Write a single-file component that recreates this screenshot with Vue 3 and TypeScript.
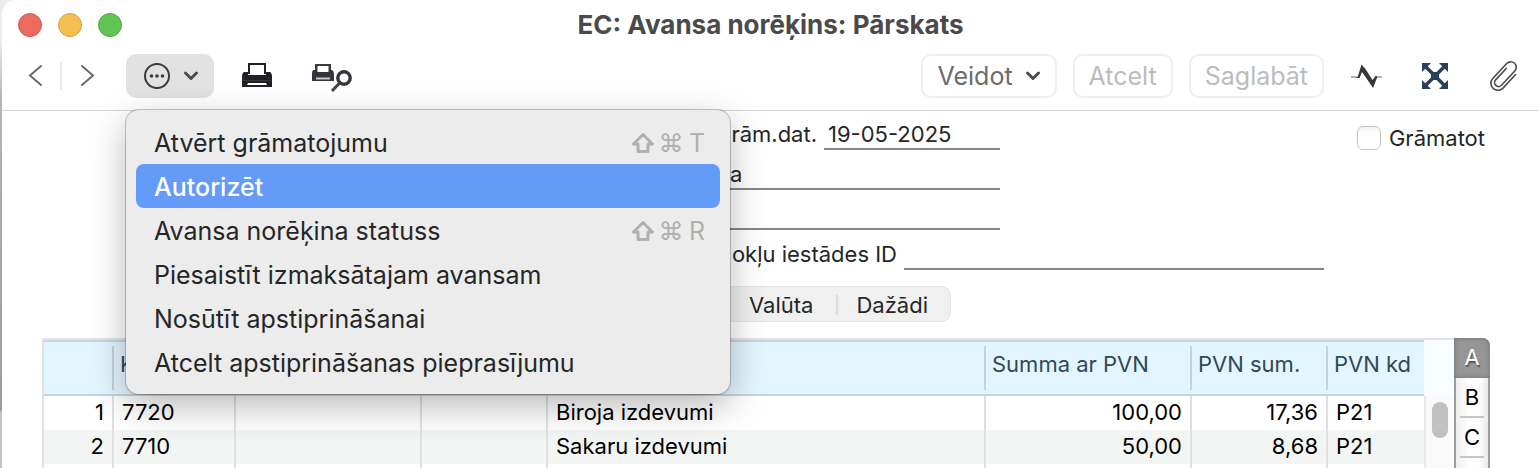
<script setup lang="ts">
import { ref } from 'vue'

interface MenuItem {
  label: string
  key?: string
}

interface Row {
  account: string
  text: string
  total: string
  vat: string
  code: string
}

const menu: MenuItem[] = [
  { label: 'Atvērt grāmatojumu', key: 'T' },
  { label: 'Autorizēt' },
  { label: 'Avansa norēķina statuss', key: 'R' },
  { label: 'Piesaistīt izmaksātajam avansam' },
  { label: 'Nosūtīt apstiprināšanai' },
  { label: 'Atcelt apstiprināšanas pieprasījumu' },
]
const activeItem = ref(1)

const rows: Row[] = [
  { account: '7720', text: 'Biroja izdevumi', total: '100,00', vat: '17,36', code: 'P21' },
  { account: '7710', text: 'Sakaru izdevumi', total: '50,00', vat: '8,68', code: 'P21' },
]

const date = ref('19-05-2025')
const person = ref('a')
const extra = ref('')
const taxId = ref('')
const posted = ref(false)
const sheets = ['A', 'B', 'C']
const sheet = ref('A')
</script>

<template>
  <div class="desk">
    <main class="window">
      <header class="head">
        <div class="titlebar">
          <div class="lights">
            <button class="light red" aria-label="Aizvērt"></button>
            <button class="light yellow" aria-label="Minimizēt"></button>
            <button class="light green" aria-label="Palielināt"></button>
          </div>
          <h1>EC: Avansa norēķins: Pārskats</h1>
        </div>
        <div class="toolbar">
          <div class="nav">
            <button class="plain" aria-label="Iepriekšējais">
              <svg width="16" height="24" viewBox="0 0 16 24"><path d="M14 2 3 11.500 14 21" /></svg>
            </button>
            <span class="divider"></span>
            <button class="plain" aria-label="Nākamais">
              <svg width="16" height="24" viewBox="0 0 16 24"><path d="m3 2 11 9.500L3 21" /></svg>
            </button>
          </div>
          <div class="ops">
            <button class="ops-button" aria-label="Darbības" aria-expanded="true">
              <svg width="28" height="28" viewBox="0 0 28 28">
                <circle cx="14" cy="14" r="12" fill="none" stroke="#3c3c3c" stroke-width="2" />
                <circle cx="8.5" cy="14" r="1.8" fill="#3c3c3c" />
                <circle cx="14" cy="14" r="1.8" fill="#3c3c3c" />
                <circle cx="19.5" cy="14" r="1.8" fill="#3c3c3c" />
              </svg>
              <svg width="16" height="12" viewBox="0 0 16 12"><path class="chev" d="m2.500 3 5.500 5.500L13.500 3" /></svg>
            </button>
            <ul class="menu" role="menu">
              <li v-for="(item, i) in menu" :key="item.label" role="none">
                <button role="menuitem" :class="{ active: i === activeItem }" @mouseenter="activeItem = i">
                  <span>{{ item.label }}</span>
                  <span v-if="item.key" class="keys">
                    <svg width="22" height="20" viewBox="0 0 22 20">
                      <path d="M11 1.500 20.500 11H16v7.500H6V11H1.500z" />
                    </svg>
                    <i>⌘</i><i>{{ item.key }}</i>
                  </span>
                </button>
              </li>
            </ul>
          </div>
          <button class="plain print" aria-label="Drukāt">
            <svg width="32" height="28" viewBox="0 0 32 28">
              <path d="M7 1h18v11H7z" fill="#202124" />
              <path d="M9 3h14v10H9z" fill="#fff" />
              <path d="M3 10h4v3h18v-3h4q2 1 2 5v10H1V15q0-4 2-5z" fill="#202124" />
              <path d="M2 18.500h28" stroke="#36373a" stroke-width="1" />
              <path d="M7 21h18l1 2H6z" fill="#fff" />
            </svg>
          </button>
          <button class="plain preview" aria-label="Priekšskatījums">
            <svg width="42" height="32" viewBox="0 0 42 32">
              <g transform="translate(0 2)">
                <path d="M4 2h16v9H4z" fill="#3a3b3e" />
                <path d="M6.500 4h11v6h-11z" fill="#fff" />
                <path d="M2 8h4v2h12V8h3q2 1 2 4v7H1v-7q0-3 1-4z" fill="#34353a" />
                <path d="M5 15.500h14v2H5z" fill="#c8c8c8" />
              </g>
              <circle cx="33" cy="18" r="6.200" fill="#fff" stroke="#34353a" stroke-width="3.400" />
              <path d="m28.500 23-7.500 8" stroke="#444549" stroke-width="3" fill="none" />
            </svg>
          </button>
          <span class="spring"></span>
          <button class="box">
            Veidot
            <svg width="16" height="12" viewBox="0 0 16 12"><path class="chev" d="m2.500 3 5.500 5.500L13.500 3" /></svg>
          </button>
          <button class="box" disabled>Atcelt</button>
          <button class="box" disabled>Saglabāt</button>
          <button class="plain pulse" aria-label="Aktivitātes">
            <svg width="32" height="26" viewBox="0 0 32 26">
              <path d="M0 14h6M25 14h6" stroke="#9a9a9a" stroke-width="1.500" />
              <path d="M5 15 7 13l3.500-11.500L14.500 6l7 11 3-4 2 .5-4.500 11.500-4-6L11 9 8.500 15z" fill="#383838" />
            </svg>
          </button>
          <button class="plain expand" aria-label="Izvērst">
            <svg width="28" height="28" viewBox="0 0 28 28">
              <g fill="#2b4059">
                <path d="M1 1h9L1 10zM27 1v9l-9-9zM1 27v-9l9 9zM27 27h-9l9-9z" />
                <path d="M10 10h8v8h-8z" />
              </g>
              <path d="m4 4 20 20M24 4 4 24" stroke="#2b4059" stroke-width="3.500" />
            </svg>
          </button>
          <button class="plain clip" aria-label="Pielikumi">
            <svg width="30" height="32" viewBox="0 0 30 32">
              <path
                transform="rotate(43 15 16)"
                d="M22.500 7v18.500a7 7 0 0 1-14 0V5a5.500 5.500 0 0 1 11 0v19.500a4 4 0 0 1-8 0V9"
                fill="none"
                stroke="#505050"
                stroke-width="1.700"
                stroke-linecap="round"
              />
            </svg>
          </button>
        </div>
      </header>

      <form class="form" @submit.prevent>
        <div class="fields">
          <div class="line">
            <label for="date">rām.dat.</label>
            <input id="date" v-model="date" type="text" />
          </div>
          <div class="line">
            <input v-model="person" class="long" type="text" aria-label="Persona" />
          </div>
          <div class="line">
            <input v-model="extra" class="long" type="text" aria-label="Piezīme" />
          </div>
          <div class="line">
            <label for="tax" class="wide">okļu iestādes ID</label>
            <input id="tax" v-model="taxId" class="tax" type="text" />
          </div>
        </div>
        <label class="check"><input v-model="posted" type="checkbox" />Grāmatot</label>
      </form>

      <div class="tabs">
        <button>Valūta</button>
        <span></span>
        <button>Dažādi</button>
      </div>

      <section class="sheet">
        <table>
          <colgroup>
            <col class="c-num" /><col class="c-acc" /><col class="c-obj" /><col class="c-qty" />
            <col /><col class="c-sum" /><col class="c-vat" /><col class="c-code" />
          </colgroup>
          <thead>
            <tr>
              <th></th>
              <th>K</th>
              <th></th>
              <th></th>
              <th></th>
              <th>Summa ar PVN</th>
              <th>PVN sum.</th>
              <th>PVN kd</th>
            </tr>
          </thead>
          <tbody>
            <tr v-for="(row, i) in rows" :key="row.account">
              <td class="num">{{ i + 1 }}</td>
              <td>{{ row.account }}</td>
              <td></td>
              <td></td>
              <td>{{ row.text }}</td>
              <td class="num">{{ row.total }}</td>
              <td class="num">{{ row.vat }}</td>
              <td>{{ row.code }}</td>
            </tr>
            <tr>
              <td v-for="n in 8" :key="n"></td>
            </tr>
          </tbody>
        </table>
        <div class="scroll">
          <div class="scroll-head"></div>
          <div class="track"><div class="thumb"></div></div>
        </div>
        <div class="pages">
          <button v-for="s in sheets" :key="s" :class="{ on: s === sheet }" @click="sheet = s">
            <span>{{ s }}</span>
          </button>
        </div>
      </section>
    </main>
  </div>
</template>

<style>
body {
  margin: 0;
  overflow: hidden;
}
</style>

<style scoped>
.desk {
  box-sizing: border-box;
  height: 100vh;
  padding-left: 2px;
  overflow: hidden;
  background: linear-gradient(#ececec 0 40px, #b4b4b4 100px, #9c9c9c 410px, #c4c4c4 412px);
  font-family: Inter, "Liberation Sans", sans-serif;
  color: #262626;
}
.desk * {
  box-sizing: border-box;
}
button,
input {
  font: inherit;
  color: inherit;
}
button {
  margin: 0;
  padding: 0;
  border: 0;
  background: none;
}
svg {
  display: block;
  overflow: visible;
}
.window {
  display: flex;
  flex-direction: column;
  height: 100%;
  background: #fff;
  border-top-left-radius: 14px;
}
.head {
  height: 111px;
  flex: none;
  border-bottom: 1px solid #d6d6d6;
}
.titlebar {
  display: grid;
  grid-template-columns: 1fr auto 1fr;
  align-items: center;
  height: 50px;
}
.lights {
  display: flex;
  gap: 16px;
  padding-left: 16px;
}
.light {
  width: 24px;
  height: 24px;
  border-radius: 50%;
  border: 1px solid;
}
.red {
  background: #ec6a5e;
  border-color: #d5584d;
}
.yellow {
  background: #f5bf4f;
  border-color: #d9a23c;
}
.green {
  background: #61c554;
  border-color: #50a73f;
}
h1 {
  margin: 0;
  font-size: 26px;
  line-height: 30px;
  font-weight: 700;
  color: #4a4a4a;
}
.toolbar {
  display: flex;
  align-items: center;
  height: 52px;
  padding: 0 20px 0 25px;
}
.nav {
  display: flex;
  align-items: center;
  gap: 17px;
  width: 99px;
}
.nav path {
  fill: none;
  stroke: #6a6a6a;
  stroke-width: 2;
  stroke-linecap: round;
}
.nav .divider {
  width: 2px;
  height: 28px;
  background: #ececec;
}
.chev {
  fill: none;
  stroke: #4c4c4c;
  stroke-width: 3;
  stroke-linecap: round;
  stroke-linejoin: round;
}
.ops {
  position: relative;
}
.ops-button {
  display: flex;
  align-items: center;
  gap: 12px;
  width: 88px;
  height: 44px;
  padding-left: 17px;
  border-radius: 10px;
  background: #e2e2e2;
}
.menu {
  position: absolute;
  z-index: 5;
  top: 56px;
  left: 0;
  width: 604px;
  margin: 0;
  padding: 10px;
  list-style: none;
  border-radius: 13px;
  background: #ececec;
  box-shadow: 0 0 0 1px rgba(0, 0, 0, 0.22), 0 12px 36px rgba(0, 0, 0, 0.28);
}
.menu button {
  display: flex;
  align-items: center;
  justify-content: space-between;
  width: 100%;
  height: 44px;
  padding: 2px 14px 0 18px;
  border-radius: 8px;
  font-size: 25px;
  text-align: left;
}
.menu button.active {
  background: #649af8;
  color: #fff;
  font-weight: 500;
}
.keys {
  display: grid;
  grid-template-columns: 22px 20px 18px;
  gap: 7px;
  align-items: center;
  justify-items: center;
  color: #b0b0b0;
}
.keys path {
  fill: none;
  stroke: #b0b0b0;
  stroke-width: 3;
  stroke-linejoin: round;
}
.keys i {
  font-style: normal;
}
.print {
  margin-left: 27px;
}
.preview {
  margin-left: 38px;
}
.spring {
  flex: 1;
}
.box {
  display: flex;
  align-items: center;
  gap: 12px;
  height: 44px;
  margin-left: 16px;
  padding: 0 14px;
  border: 2px solid #efefef;
  border-radius: 10px;
  font-size: 25px;
  color: #6c6c6c;
}
.box:disabled {
  color: #bcbcbc;
}
.pulse {
  margin-left: 27px;
}
.expand {
  margin-left: 38px;
}
.clip {
  margin-left: 40px;
}
.form {
  display: flex;
  justify-content: space-between;
  padding: 9px 54px 0 558px;
  font-size: 22px;
}
.line {
  display: flex;
  align-items: flex-end;
  height: 40px;
}
.line:first-child {
  height: 30px;
}
.line label {
  width: 257px;
  margin-right: 7px;
  line-height: 32px;
  text-align: right;
}
.line label.wide {
  width: 337px;
}
.line input {
  width: 176px;
  height: 30px;
  padding: 0 4px;
  border: 0;
  border-bottom: 2px solid #858585;
  background: none;
  outline: none;
}
.line input.long {
  width: 300px;
  margin-left: 140px;
  padding-left: 30px;
}
.line input.tax {
  width: 420px;
}
.check {
  display: flex;
  align-items: center;
  gap: 8px;
  height: 36px;
}
.check input {
  appearance: none;
  width: 24px;
  height: 24px;
  margin: 0;
  border: 1px solid #c4c4c4;
  border-radius: 6px;
  background: linear-gradient(#f2f2f2, #fff 30%);
}
.tabs {
  display: flex;
  align-items: center;
  align-self: flex-start;
  height: 36px;
  margin: 16px 0 0 598px;
  padding: 2px 22px 0 148px;
  border: 1px solid #e6e6e6;
  border-radius: 9px;
  background: #f0f0f0;
  font-size: 22px;
  flex: none;
}
.tabs span {
  width: 2px;
  height: 20px;
  margin: 0 18px 0 23px;
  background: #dadada;
}
.sheet {
  display: flex;
  flex: 1;
  min-height: 0;
  margin: 16px 49px 0 40px;
}
table {
  flex: 1;
  width: 0;
  table-layout: fixed;
  border-collapse: separate;
  border-spacing: 0;
  align-self: flex-start;
  border-top: 2px solid #e2e2e2;
  border-left: 2px solid #e2e2e2;
  font-size: 22px;
}
.c-num { width: 70px; }
.c-acc { width: 122px; }
.c-obj { width: 186px; }
.c-qty { width: 126px; }
.c-sum { width: 206px; }
.c-vat { width: 136px; }
.c-code { width: 96px; }
th {
  height: 56px;
  padding: 0 0 8px 6px;
  border-top: 2px solid #c3d5de;
  border-bottom: 2px solid #c3d5de;
  background: linear-gradient(#c3d2d9, #c3d2d9) right center / 2px 44px no-repeat #e3f5fe;
  color: #2f4a55;
  font-weight: 400;
  text-align: left;
  white-space: nowrap;
}
th:last-child {
  background: #e3f5fe;
}
td {
  height: 34px;
  padding: 0 8px 2px;
  border-right: 2px solid #e0e0e0;
  color: #000;
  line-height: 32px;
  white-space: nowrap;
}
td:last-child {
  border-right: 0;
}
tbody tr:nth-child(even) td {
  background: #f3f5f4;
}
.num {
  text-align: right;
}
.scroll {
  display: flex;
  flex-direction: column;
  width: 30px;
  border-top: 2px solid #e2e2e2;
}
.scroll-head {
  height: 56px;
  flex: none;
  background: #f8feff;
}
.track {
  flex: 1;
  padding: 6px;
  border-left: 2px solid #e8e8e8;
  background: #fafafa;
}
.thumb {
  width: 16px;
  height: 36px;
  border-radius: 8px;
  background: #c1c1c1;
}
.pages {
  display: flex;
  flex-direction: column;
  width: 36px;
  border: 0 solid #9b9ba0;
  border-width: 0 2px;
  border-top-right-radius: 8px;
  background: linear-gradient(90deg, #eee, #fff 40%, #fff 70%, #eaeaea);
  font-size: 22px;
  color: #000;
}
.pages button {
  height: 40px;
  flex: none;
  padding: 0 4px;
}
.pages span {
  display: block;
  line-height: 38px;
  border-bottom: 2px solid #c6c6c6;
}
.pages .on {
  margin: 0 -2px;
  padding: 0 6px;
  border-top-right-radius: 8px;
  background: #969696;
  box-shadow: inset 0 0 5px #707070;
  color: #fff;
  text-shadow: 1px 2px 1px #555;
}
.pages .on span {
  border-color: transparent;
}
</style>
